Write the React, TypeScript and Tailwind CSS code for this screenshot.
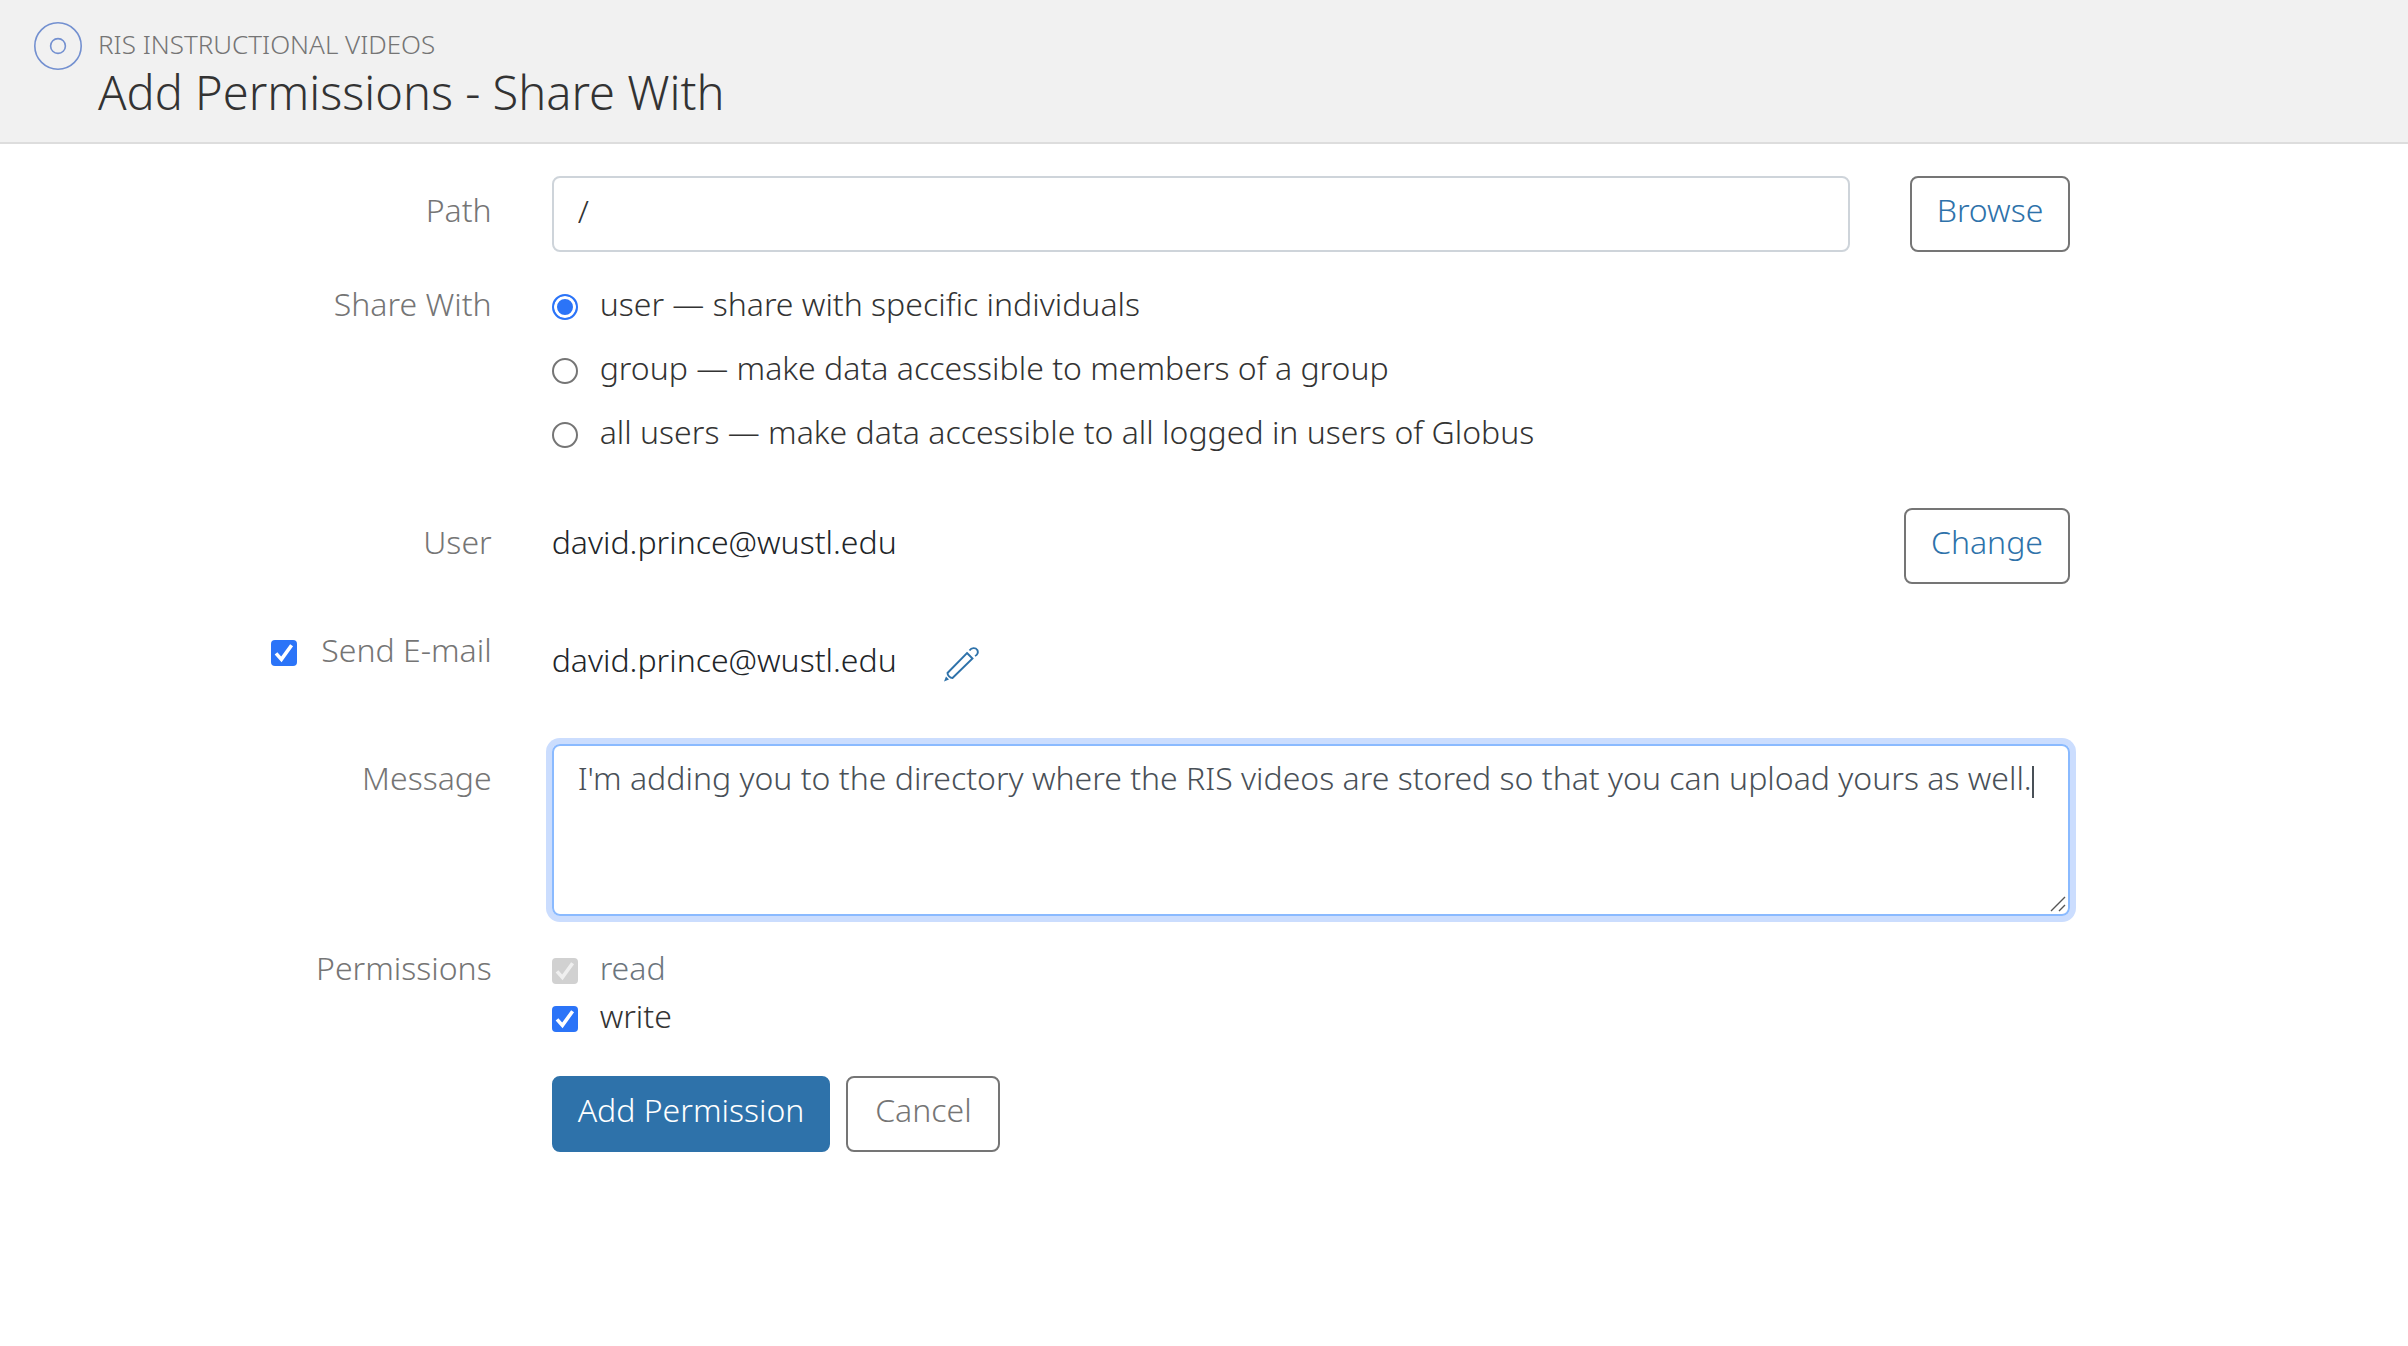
import { useState, type InputHTMLAttributes, type ReactNode } from "react";

function Row({
  label,
  htmlFor,
  className = "",
  children,
}: {
  label: ReactNode;
  htmlFor?: string;
  className?: string;
  children: ReactNode;
}) {
  return (
    <div className={`flex ${className}`}>
      <div className="w-1/6 shrink-0 pr-[30px] pt-2.5 text-right text-[#757575]">
        {htmlFor ? <label htmlFor={htmlFor}>{label}</label> : label}
      </div>
      <div className="min-w-0 flex-1 px-[30px]">{children}</div>
    </div>
  );
}

function Checkbox(props: InputHTMLAttributes<HTMLInputElement>) {
  return (
    <span className="relative mt-1.5 inline-flex size-[26px] shrink-0">
      <input
        type="checkbox"
        className="peer size-[26px] appearance-none rounded-[4px] border-2 border-[#757575] bg-white checked:border-0 checked:bg-[#2b74f8] disabled:bg-[#d1d1d1]"
        {...props}
      />
      <svg
        viewBox="0 0 26 26"
        aria-hidden="true"
        className="pointer-events-none absolute inset-0 hidden text-white peer-checked:block peer-disabled:text-[#efefef]"
      >
        <path
          d="M5 13.4 L10.4 19.4 L20.6 5.2"
          fill="none"
          stroke="currentColor"
          strokeWidth="3.6"
        />
      </svg>
    </span>
  );
}

function Radio(props: InputHTMLAttributes<HTMLInputElement>) {
  return (
    <input
      type="radio"
      className="mt-1.5 size-[26px] shrink-0 appearance-none rounded-full border-2 border-[#757575] bg-white checked:border-[#2b74f8] checked:bg-[#2b74f8] checked:shadow-[inset_0_0_0_3px_#ffffff]"
      {...props}
    />
  );
}

function OutlineButton({ className, children }: { className: string; children: ReactNode }) {
  return (
    <button
      type="button"
      className={`shrink-0 rounded-lg border-2 border-[#757575] px-6 pt-2 pb-4 ${className}`}
    >
      {children}
    </button>
  );
}

const shareOptions = [
  { id: "user", text: "user — share with specific individuals" },
  { id: "group", text: "group — make data accessible to members of a group" },
  { id: "all", text: "all users — make data accessible to all logged in users of Globus" },
];

export default function App() {
  const [share, setShare] = useState("user");
  const [path, setPath] = useState("/");
  const [sendMail, setSendMail] = useState(true);
  const [write, setWrite] = useState(true);
  const [message, setMessage] = useState(
    "I'm adding you to the directory where the RIS videos are stored so that you can upload yours as well.",
  );

  return (
    <div className="min-h-screen bg-white font-['Noto_Sans',sans-serif] text-[32px] leading-[48px] font-light text-[#333333]">
      <header className="flex gap-4 border-b-2 border-[#dddddd] bg-[#f1f1f1] pt-[22px] pr-8 pb-5 pl-[34px]">
        <svg viewBox="0 0 48 48" className="size-12 shrink-0" fill="none" stroke="#7390d0" strokeWidth="1.6" aria-hidden="true">
          <circle cx="24" cy="24" r="23.2" />
          <circle cx="24" cy="24" r="7.4" />
        </svg>
        <div>
          <p className="pt-1 text-[26px] leading-9 text-[#757575]">RIS INSTRUCTIONAL VIDEOS</p>
          <h1 className="text-[47px] leading-[60px]">Add Permissions - Share With</h1>
        </div>
      </header>

      <form className="mr-[308px] ml-[206px] pt-8">
        <Row label="Path" htmlFor="path">
          <div className="flex gap-[60px]">
            <input
              id="path"
              value={path}
              onChange={(e) => setPath(e.target.value)}
              className="h-[76px] min-w-0 flex-1 rounded-lg border-2 border-[#ced4da] px-6 pt-2 pb-4 outline-none"
            />
            <OutlineButton className="min-w-40 text-[#2e72aa]">Browse</OutlineButton>
          </div>
        </Row>

        <Row label="Share With" className="mt-[18px]">
          <div role="radiogroup" aria-label="Share With" className="flex flex-col items-start gap-4 pt-2.5">
            {shareOptions.map((o) => (
              <label key={o.id} className="flex items-center gap-[22px]">
                <Radio name="share" checked={share === o.id} onChange={() => setShare(o.id)} />
                {o.text}
              </label>
            ))}
          </div>
        </Row>

        <Row label="User" className="mt-[52px]">
          <div className="flex items-start justify-between">
            <span className="pt-2.5 text-[#212529]">david.prince@wustl.edu</span>
            <OutlineButton className="min-w-[166px] text-[#2e72aa]">Change</OutlineButton>
          </div>
        </Row>

        <Row
          className="mt-8"
          label={
            <span className="flex items-center justify-end gap-6">
              <Checkbox id="mail" checked={sendMail} onChange={(e) => setSendMail(e.target.checked)} />
              <label htmlFor="mail">Send E-mail</label>
            </span>
          }
        >
          <div className="flex items-center gap-[46px] pt-5 text-[#212529]">
            david.prince@wustl.edu
            <button type="button" aria-label="Edit e-mail" className="mt-2 text-[#2e72aa]">
              <svg viewBox="0 0 36 36" className="size-9" fill="none" stroke="currentColor" strokeWidth="1.9">
                <path d="M24 7 L29.500 12.500 L9.500 32 C7 32 4.500 29.500 4.500 27 Z" />
                <path d="M26.500 4.500 C28.500 1.500 32.500 1.300 34.300 4 C35.500 6.500 34.500 8.800 32 10" />
                <path d="M3 30.500 L6 33.500 L1 35.500 Z" fill="currentColor" stroke="none" />
              </svg>
            </button>
          </div>
        </Row>

        <Row label="Message" htmlFor="message" className="mt-[60px]">
          <div className="relative flex">
            <textarea
              id="message"
              rows={3}
              value={message}
              onChange={(e) => setMessage(e.target.value)}
              className="h-[172px] w-full resize-none rounded-lg border-2 border-[#8abaff] px-6 py-2 text-[#495057] caret-transparent ring-[6px] ring-[#cbddfe] outline-none"
            />
            <span aria-hidden="true" className="pointer-events-none absolute top-[22px] right-9 h-8 w-0.5 bg-[#495057]" />
            <svg viewBox="0 0 16 16" className="pointer-events-none absolute right-1 bottom-1 size-4" stroke="#555555" strokeWidth="1.4" aria-hidden="true">
              <path d="M1 15 L15 1 M9 15 L15 9" />
            </svg>
          </div>
        </Row>

        <Row label="Permissions" className="mt-[18px]">
          <div className="flex flex-col items-start pt-2.5">
            <label className="flex items-center gap-[22px] text-[#6c757d]">
              <Checkbox checked disabled readOnly />
              read
            </label>
            <label className="flex items-center gap-[22px]">
              <Checkbox checked={write} onChange={(e) => setWrite(e.target.checked)} />
              write
            </label>
          </div>
          <div className="mt-9 flex gap-4">
            <button type="submit" className="rounded-lg border-2 border-[#2e72aa] bg-[#2e72aa] px-6 pt-2 pb-4 text-white">
              Add Permission
            </button>
            <OutlineButton className="min-w-[154px] text-[#757575]">Cancel</OutlineButton>
          </div>
        </Row>
      </form>
    </div>
  );
}
